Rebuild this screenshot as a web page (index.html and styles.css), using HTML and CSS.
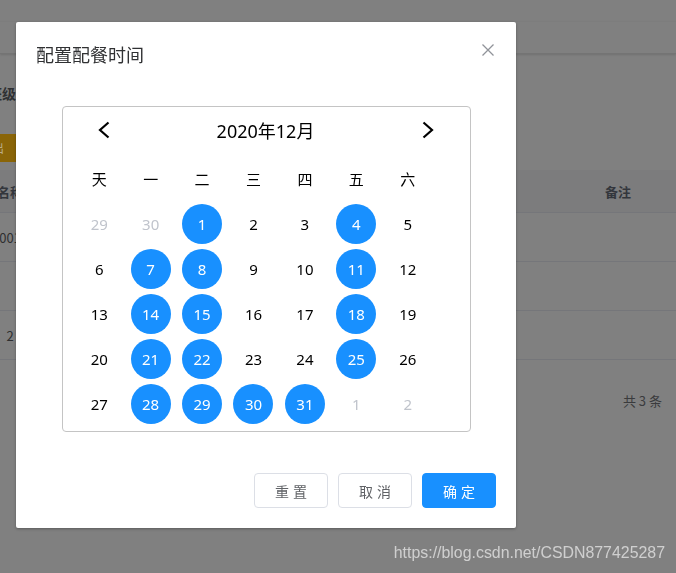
FILE: index.html
```html
<!DOCTYPE html>
<html lang="zh-CN">
<head>
<meta charset="utf-8">
<title>配置配餐时间</title>
<link rel="stylesheet" href="styles.css">
</head>
<body>
<div class="page">
  <div class="topbar"></div>
  <div class="tabs"></div>
  <div class="filter"><span class="filter-label">班级</span></div>
  <div class="toolbar"><span class="btn-warning">导出</span></div>
  <div class="table">
    <div class="tr th">
      <div class="td c1"><span>名称</span></div>
      <div class="td grow"></div>
      <div class="td c-note">备注</div>
    </div>
    <div class="tr">
      <div class="td c1"><span>001</span></div>
      <div class="td grow"></div>
      <div class="td c-note"></div>
    </div>
    <div class="tr">
      <div class="td c1"><span></span></div>
      <div class="td grow"></div>
      <div class="td c-note"></div>
    </div>
    <div class="tr">
      <div class="td c1"><span>2</span></div>
      <div class="td grow"></div>
      <div class="td c-note"></div>
    </div>
  </div>
  <div class="pager">共 3 条</div>
</div>

<div class="dialog">
  <div class="dlg-header">
    <span class="dlg-title">配置配餐时间</span>
    <svg class="dlg-close" width="16" height="16" viewBox="0 0 16 16"><path d="M2.5 2.5L13.5 13.5M13.5 2.5L2.5 13.5" stroke="#909399" stroke-width="1.3" fill="none"/></svg>
  </div>
  <div class="dlg-body">
    <div class="cal">
      <div class="cal-head">
        <svg width="12" height="18" viewBox="0 0 12 18"><polyline points="10.5,1.5 2,9 10.5,16.5" fill="none" stroke="#000" stroke-width="2.2"/></svg>
        <span class="cal-title">2020年12月</span>
        <svg width="12" height="18" viewBox="0 0 12 18"><polyline points="1.5,1.5 10,9 1.5,16.5" fill="none" stroke="#000" stroke-width="2.2"/></svg>
      </div>
      <div class="cal-week">
        <div class="day">天</div><div class="day">一</div><div class="day">二</div><div class="day">三</div><div class="day">四</div><div class="day">五</div><div class="day">六</div>
      </div>
      <div class="cal-grid">
        <div class="day muted">29</div><div class="day muted">30</div><div class="day on"><span>1</span></div><div class="day">2</div><div class="day">3</div><div class="day on"><span>4</span></div><div class="day">5</div>
        <div class="day">6</div><div class="day on"><span>7</span></div><div class="day on"><span>8</span></div><div class="day">9</div><div class="day">10</div><div class="day on"><span>11</span></div><div class="day">12</div>
        <div class="day">13</div><div class="day on"><span>14</span></div><div class="day on"><span>15</span></div><div class="day">16</div><div class="day">17</div><div class="day on"><span>18</span></div><div class="day">19</div>
        <div class="day">20</div><div class="day on"><span>21</span></div><div class="day on"><span>22</span></div><div class="day">23</div><div class="day">24</div><div class="day on"><span>25</span></div><div class="day">26</div>
        <div class="day">27</div><div class="day on"><span>28</span></div><div class="day on"><span>29</span></div><div class="day on"><span>30</span></div><div class="day on"><span>31</span></div><div class="day muted">1</div><div class="day muted">2</div>
      </div>
    </div>
  </div>
  <div class="dlg-footer">
    <button class="btn">重置</button>
    <button class="btn">取消</button>
    <button class="btn primary">确定</button>
  </div>
</div>

<div class="watermark">https://blog.csdn.net/CSDN877425287</div>
</body>
</html>
```

FILE: styles.css
```css
html, body {
  margin: 0;
  padding: 0;
}
body {
  width: 676px;
  height: 573px;
  overflow: hidden;
  background: #808080;
  font-family: "Noto Sans", "Noto Sans CJK SC", sans-serif;
}

/* background page (dimmed) */
.page {
  width: 676px;
}
.topbar {
  height: 21px;
}
.tabs {
  height: 31px;
  border-top: 1px solid #7d7d7d;
  border-bottom: 1px solid #747474;
  box-shadow: 0 1px 2px rgba(0, 0, 0, 0.12);
}
.filter {
  margin-top: 25px;
  height: 28px;
  width: 16px;
  display: flex;
  align-items: center;
  justify-content: flex-end;
}
.filter-label {
  flex: none;
  font-size: 14px;
  font-weight: 700;
  color: #2f3033;
  font-family: "Noto Sans CJK SC", sans-serif;
}
.toolbar {
  margin-top: 27px;
  height: 28px;
  display: flex;
}
.btn-warning {
  width: 70px;
  height: 28px;
  line-height: 28px;
  background: #8a6508;
  color: #b9ab88;
  font-size: 12px;
  text-indent: -20px;
  overflow: hidden;
  white-space: nowrap;
  font-family: "Noto Sans CJK SC", sans-serif;
}
.table {
  margin-top: 8px;
}
.tr {
  display: flex;
  height: 48px;
  border-bottom: 1px solid #75767a;
}
.tr.th {
  height: 42px;
  background: #7c7c7d;
  font-weight: 700;
  color: #33363c;
}
.td {
  display: flex;
  align-items: center;
  font-size: 13px;
  color: #2e2f31;
  font-family: "Noto Sans CJK SC", sans-serif;
}
.th .td {
  color: #33363c;
}
.c1 {
  width: 20px;
  justify-content: center;
}
.c1 span {
  flex: none;
  white-space: nowrap;
}
.grow {
  flex: 1;
}
.c-note {
  width: 71px;
}
.pager {
  margin-top: 32px;
  height: 18px;
  line-height: 18px;
  padding-right: 14px;
  text-align: right;
  font-size: 13px;
  color: #3a3b3d;
  font-family: "Noto Sans CJK SC", sans-serif;
}

/* dialog */
.dialog {
  position: fixed;
  top: 22px;
  left: 16px;
  width: 500px;
  background: #fff;
  border-radius: 2px;
  box-shadow: 0 1px 3px rgba(0, 0, 0, 0.3);
}
.dlg-header {
  position: relative;
  padding: 20px 20px 10px;
}
.dlg-title {
  display: block;
  font-size: 18px;
  line-height: 24px;
  color: #303133;
  font-family: "Noto Sans CJK SC", sans-serif;
}
.dlg-close {
  position: absolute;
  top: 20px;
  right: 20px;
}
.dlg-body {
  padding: 30px 20px;
}
.cal {
  box-sizing: border-box;
  width: 409px;
  margin: 0 auto;
  border: 1px solid #c4c4c4;
  border-radius: 4px;
  padding-bottom: 5px;
}
.cal-head {
  height: 45px;
  padding: 0 36px 0 35px;
  display: flex;
  align-items: center;
  justify-content: space-between;
}
.cal-title {
  font-size: 18px;
  color: #000;
}
.cal-week,
.cal-grid {
  display: grid;
  grid-template-columns: repeat(7, 51.43px);
  padding-left: 11px;
}
.cal-week {
  margin-top: 4px;
}
.day {
  height: 45px;
  display: flex;
  align-items: center;
  justify-content: center;
  font-size: 15px;
  color: #000;
}
.day.muted {
  color: #c0c4cc;
}
.day.on span {
  width: 40px;
  height: 40px;
  border-radius: 50%;
  background: #1890ff;
  color: #fff;
  display: flex;
  align-items: center;
  justify-content: center;
}
.dlg-footer {
  padding: 11px 20px 20px;
  display: flex;
  justify-content: flex-end;
  gap: 10px;
}
.btn {
  box-sizing: border-box;
  width: 74px;
  height: 35px;
  margin: 0;
  border: 1px solid #dcdfe6;
  border-radius: 4px;
  background: #fff;
  color: #606266;
  font-size: 14px;
  font-family: "Noto Sans CJK SC", sans-serif;
  letter-spacing: 4px;
  padding: 0 0 0 4px;
  display: flex;
  align-items: center;
  justify-content: center;
}
.btn.primary {
  background: #1890ff;
  border-color: #1890ff;
  color: #fff;
}

.watermark {
  position: fixed;
  top: 544px;
  right: 11px;
  font-family: "Liberation Sans", Arial, sans-serif;
  font-size: 15.9px;
  line-height: 18px;
  color: rgba(255, 255, 255, 0.62);
}
```
